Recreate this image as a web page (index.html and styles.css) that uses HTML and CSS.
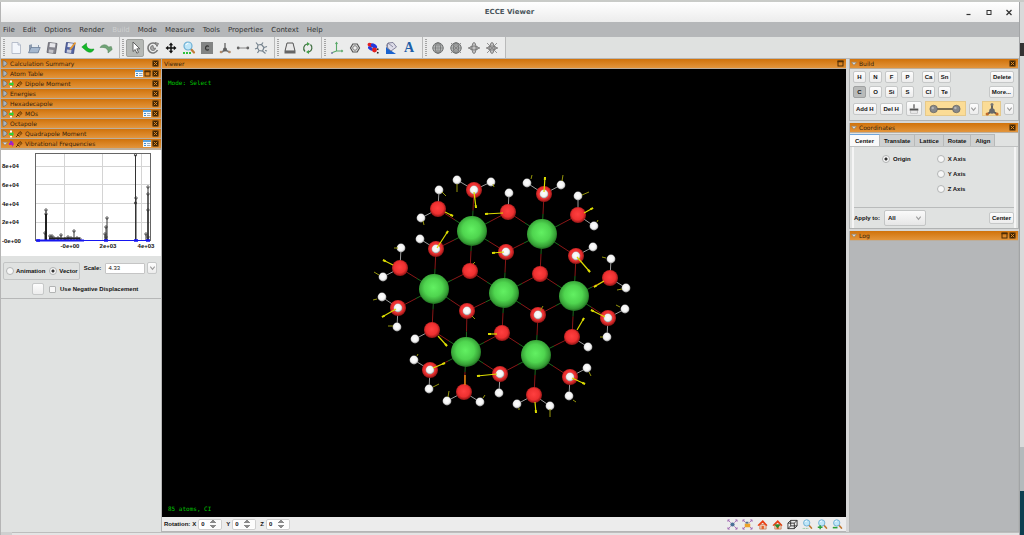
FILE: index.html
```html
<!DOCTYPE html>
<html lang="en">
<head>
<meta charset="utf-8">
<title>ECCE Viewer</title>
<link rel="stylesheet" href="styles.css">
</head>
<body>
<svg class="defs" aria-hidden="true">
  <defs>
    <symbol id="i-close" viewBox="0 0 7 7"><rect x=".5" y=".5" width="6" height="6" fill="#3d2405"/><path d="M1.800 1.800l3.400 3.400M5.200 1.800l-3.400 3.400" stroke="#e08a22" stroke-width="1"/></symbol>
    <symbol id="i-max" viewBox="0 0 7 7"><rect x="1" y="1" width="5" height="5" fill="none" stroke="#4d2c05"/><path d="M.5 1.500h6" stroke="#4d2c05" stroke-width="1.500"/></symbol>
    <symbol id="i-table" viewBox="0 0 8 7"><rect x="0" y="0" width="8" height="7" fill="#f2f8fc"/><path d="M0 0h8v2H0z" fill="#5aa2dc"/><path d="M1 3.500h2M1 5.500h2" stroke="#3f8fd0"/><path d="M4 3.500h3.500M4 5.500h3.500" stroke="#9ab"/></symbol>
    <symbol id="i-right" viewBox="0 0 5 7"><path d="M.5 .5C3 1 4.500 2.500 4.500 3.500S3 6 .5 6.500z" fill="#a9b3bc" stroke="#6d675f" stroke-width=".7"/></symbol>
    <symbol id="i-down" viewBox="0 0 7 5"><path d="M.5 1h6L3.500 4.500z" fill="#d5dade" stroke="#8a7a66" stroke-width=".7"/></symbol>
    <symbol id="i-clip" viewBox="0 0 8 8"><path d="M1 7l2-2M2 4l2.500 2.500M3 4l2-2.500 2 1.800L4.800 5.600M4 4.500l2-2" fill="none" stroke="#5b3204" stroke-width=".9"/></symbol>
    <symbol id="i-go" viewBox="0 0 5 8"><rect x="1" y=".5" width="2" height="2" fill="#fff"/><path d="M0 3h3V1.500l2 2.500-2 2.500V5H0z" fill="#30cf3a"/><rect x="1" y="6" width="2" height="1.500" fill="#fff"/></symbol>
    <symbol id="i-chev" viewBox="0 0 8 8"><path d="M1.500 2.500L4 5.500 6.500 2.500" fill="none" stroke="#9a9a9a" stroke-width="1.200"/></symbol>
    <symbol id="i-globe" viewBox="0 0 14 14"><circle cx="7" cy="7" r="5.200" fill="#b4b6b6" stroke="#707272"/><path d="M1 7h12M7 1v12M3 4h8M3 10h8" stroke="#858787" stroke-width=".7"/><ellipse cx="7" cy="7" rx="2.500" ry="5.200" fill="none" stroke="#6c6e6e" stroke-width=".8"/></symbol>
    <symbol id="i-orbit" viewBox="0 0 14 14"><path d="M1 7h12" stroke="#777" stroke-width="1.200"/><ellipse cx="7" cy="7" rx="2" ry="5.500" fill="#d8d8d8" stroke="#777"/><ellipse cx="7" cy="7" rx="4.500" ry="2" fill="none" stroke="#777"/><path d="M7 2v10" stroke="#999" stroke-width=".7"/></symbol>
    <symbol id="i-cross" viewBox="0 0 14 14"><path d="M2 2l10 10M12 2L2 12" stroke="#7d7d7d" stroke-width=".8"/></symbol>
    <symbol id="i-mag" viewBox="0 0 14 14"><path d="M8 7l4 4.500" stroke="#c07a35" stroke-width="2.200" stroke-linecap="round"/><circle cx="6" cy="5" r="4" fill="#bfe6f8" stroke="#6fb0d4" stroke-width="1.200"/><path d="M3.800 4a2.500 2.500 0 0 1 2.500-1.500" fill="none" stroke="#fff"/></symbol>
    <symbol id="i-house" viewBox="0 0 12 12"><path d="M3 6h7v5H3z" fill="#f3c8b0" stroke="#b9704a" stroke-width=".7"/><path d="M.5 6.800L6.300 1l5.200 5.800-1.500.8-3.800-3.600-4.200 3.600z" fill="#ea3f14"/><path d="M5 7.500h2.500V11H5z" fill="#e0622c"/></symbol>
    <symbol id="i-fit" viewBox="0 0 12 12"><path d="M1 1l3 3M11 1L8 4M1 11l3-3M11 11L8 8M1 3V1h2M9 1h2v2M1 9v2h2M9 11h2V9" fill="none" stroke="#a26bb5" stroke-width="1"/></symbol>
    <symbol id="i-save" viewBox="0 0 14 14"><path d="M3.500 1.500l8.500 1-1.500 10-8.500-1z" fill="#85858e" stroke="#5d5d66" stroke-width=".8"/><path d="M5 2l5.500.6-.6 4L4.400 6z" fill="#e6e6ea"/><path d="M4 8.500l4.500.5-.4 3-4.500-.5z" fill="#c5c5ca"/></symbol>
    <radialGradient id="ca" cx=".48" cy=".45" r=".55"><stop offset="0" stop-color="#62f062"/><stop offset=".55" stop-color="#4fd54f"/><stop offset=".85" stop-color="#36a036"/><stop offset="1" stop-color="#1f6c1f"/></radialGradient>
    <radialGradient id="ox" cx=".48" cy=".45" r=".55"><stop offset="0" stop-color="#ff4040"/><stop offset=".65" stop-color="#ee3030"/><stop offset="1" stop-color="#8c1414"/></radialGradient>
    <radialGradient id="hy" cx=".48" cy=".45" r=".55"><stop offset="0" stop-color="#fff"/><stop offset=".65" stop-color="#f2f2f2"/><stop offset="1" stop-color="#8e8e8e"/></radialGradient>
  </defs>
</svg>

<div class="desk">
<div class="window">
  <header class="titlebar">
    <h1>ECCE Viewer</h1>
    <div class="winbtns">
      <button aria-label="Minimize"><svg viewBox="0 0 8 8"><path d="M1.500 6.500h4" stroke="#333" stroke-width="1.200"/></svg></button>
      <button aria-label="Maximize"><svg viewBox="0 0 8 8"><rect x="2" y="2.500" width="4" height="4" fill="none" stroke="#333"/></svg></button>
      <button aria-label="Close"><svg viewBox="0 0 8 8"><path d="M1.500 2l5 5M6.500 2l-5 5" stroke="#333" stroke-width="1.300"/></svg></button>
    </div>
  </header>

  <nav class="menubar">
    <button>File</button><button>Edit</button><button>Options</button><button>Render</button><button disabled>Build</button><button>Mode</button><button>Measure</button><button>Tools</button><button>Properties</button><button>Context</button><button>Help</button>
  </nav>

  <div class="toolbar">
    <div class="group"><i class="grip"></i>
      <button aria-label="New"><svg viewBox="0 0 14 14"><path d="M3 1.500h6l2.500 2.500v8.500H3z" fill="#f3f6fb" stroke="#aab2c2" stroke-width=".8"/><path d="M9 1.500V4h2.500" fill="#dde3ee" stroke="#aab2c2" stroke-width=".8"/></svg></button>
      <button aria-label="Open"><svg viewBox="0 0 14 14"><path d="M2 4l4-1 1 1h5v7.500H2z" fill="#8b9aae"/><path d="M5 2.500l6-.5v5H5z" fill="#e6eaee"/><path d="M1.500 11.800L4 6.500h9.200L11 11.800z" fill="#a4b7ce" stroke="#6c7f98" stroke-width=".8"/></svg></button>
      <button aria-label="Save"><svg viewBox="0 0 14 14"><use href="#i-save"/></svg></button>
      <button aria-label="Save as"><svg viewBox="0 0 14 14"><path d="M3.500 1.500l8.500 1-1.500 10-8.500-1z" fill="#5465a4" stroke="#39467c" stroke-width=".8"/><path d="M5 2l5 .6-.6 4L4.400 6z" fill="#e6e8f2"/><path d="M4 8.500l4.500.5-.4 3-4.500-.5z" fill="#c7cbdc"/><path d="M12.500 1.500L7 8.500" stroke="#e79a33" stroke-width="1.800"/></svg></button>
      <button aria-label="Undo"><svg viewBox="0 0 14 14"><path d="M.8 6L5.500 2.200v2.300C6.500 8 9 8.500 13 8c-1.500 3.800-4.500 4-7.500 2z" fill="#14b828" stroke="#0d8a1c" stroke-width=".5"/></svg></button>
      <button aria-label="Redo"><svg viewBox="0 0 14 14"><path d="M13.200 8.500L9 12V9.800C8 7 5.500 6 1 6.500 3 3 7.500 2.800 9.500 6l2.800-.5z" fill="#6fa476" stroke="#55805b" stroke-width=".5"/></svg></button>
    </div>
    <div class="group"><i class="grip"></i>
      <button class="on" aria-label="Select"><svg viewBox="0 0 14 14"><path d="M5 1v9.500l2.200-2 1.600 3.700 1.700-.8-1.700-3.600h3z" fill="#fff" stroke="#555" stroke-width=".9"/></svg></button>
      <button aria-label="Rotate"><svg viewBox="0 0 14 14"><path d="M11.500 9A5 5 0 1 1 11 4" fill="none" stroke="#777" stroke-width="1.600"/><path d="M9 1.500l3.500 1-1.500 3zM9.500 7a2.500 2.500 0 1 1-2.500-2.500l.5 3z" fill="#aaa" stroke="#777" stroke-width=".9"/></svg></button>
      <button aria-label="Translate"><svg viewBox="0 0 14 14"><path d="M3 7h8M7 3v8" stroke="#111" stroke-width="1.500"/><path d="M7 1.500l2.200 2.700H4.800zM7 12.500l2.200-2.700H4.800zM1.500 7l2.700-2.200v4.400zM12.500 7L9.800 4.800v4.400z" fill="#111"/></svg></button>
      <button aria-label="Zoom"><svg viewBox="0 0 14 14"><use href="#i-mag"/><path d="M1 12h8" stroke="#2fc23e" stroke-width="2.200" stroke-dasharray="2 1"/></svg></button>
      <button aria-label="Element"><svg viewBox="0 0 14 14"><rect x="1" y="1" width="12" height="12" fill="#828484"/><path d="M8.800 5.500Q7 4.200 5.800 5.800 5 7.500 6.200 8.800 7.500 9.600 8.800 8.600" fill="none" stroke="#333" stroke-width="1.200"/></svg></button>
      <button aria-label="Fragment"><svg viewBox="0 0 14 14"><path d="M7 2v7M7 9l-4 2.500M7 9l4.500 2" stroke="#777" stroke-width="1.500"/><circle cx="7" cy="8.500" r="2" fill="#5f5f5f"/><circle cx="3" cy="11" r="1.300" fill="#b08a6c"/><circle cx="11.500" cy="11" r="1.300" fill="#b08a6c"/></svg></button>
      <button aria-label="Bond"><svg viewBox="0 0 14 14"><path d="M2 7h10" stroke="#888" stroke-width="1"/><circle cx="2.200" cy="7" r="1.400" fill="#666"/><circle cx="11.800" cy="7" r="1.400" fill="#666"/></svg></button>
      <button aria-label="Ring"><svg viewBox="0 0 14 14"><path d="M4 4l3.500-.5L10 6.500 8.500 10 5 9.500 3.500 7zM4 4L2 1.500M7.500 3.500L9 1.500M10 6.500l3-1M8.500 10l3 2.500M5 9.500L3.500 12M3.500 7L1 8M11 9.500l2 .5" fill="none" stroke="#76838e" stroke-width="1.200"/></svg></button>
    </div>
    <div class="group"><i class="grip"></i>
      <button aria-label="Perspective"><svg viewBox="0 0 14 14"><path d="M4 2h6l2 8H2z" fill="#e9e9e9" stroke="#555"/><path d="M1.500 10h11v2.500h-11z" fill="#666"/></svg></button>
      <button aria-label="Spin"><svg viewBox="0 0 14 14"><path d="M4 10.500A4.500 4.500 0 0 1 6 3M9.500 3.500A4.500 4.500 0 0 1 8 11" fill="none" stroke="#3a6b3c" stroke-width="1.200"/><path d="M6 1l3 2-3 2zM8 9l-3 2 3 2z" fill="#44a04a"/></svg></button>
    </div>
    <div class="group"><i class="grip"></i>
      <button aria-label="Axes"><svg viewBox="0 0 14 14"><path d="M6.500 1.500V10h6M6.500 10l-4 1.500M5.500 3l1-1.500 1 1.500M11.500 9l1 1-1 1" fill="none" stroke="#58a868" stroke-width="1.100"/><path d="M1 12h2" stroke="#448" stroke-width="1"/></svg></button>
      <button aria-label="Aromatic ring"><svg viewBox="0 0 14 14"><path d="M4.800 3h4.400l2.300 4-2.300 4H4.800L2.500 7z" fill="none" stroke="#555" stroke-width="1.200"/><circle cx="7" cy="7" r="2.300" fill="none" stroke="#777"/></svg></button>
      <button aria-label="Surface"><svg viewBox="0 0 14 14"><ellipse cx="4.500" cy="4" rx="3" ry="2" fill="#e32020" transform="rotate(25 4.500 4)"/><ellipse cx="8" cy="5" rx="3.500" ry="2" fill="#2238e0" transform="rotate(35 8 5)"/><ellipse cx="4.500" cy="7.500" rx="3" ry="1.600" fill="#2238e0" transform="rotate(35 4.500 7.500)"/><circle cx="8.500" cy="9" r="2.400" fill="#e32020"/><path d="M11 8l1.500.5M11 11.500l1.500.5" stroke="#222" stroke-width="1.600"/></svg></button>
      <button aria-label="Background"><svg viewBox="0 0 14 14"><path d="M2 6v7h10l-3-2z" fill="#1a63cf"/><path d="M4 2l5-.5L12.500 6 7 10 3 6.500z" fill="#dddce8" stroke="#777791" stroke-width=".9"/><path d="M4 2q-3 2 0 5M4 2l5 4" fill="none" stroke="#777791" stroke-width=".8"/></svg></button>
      <button class="letter" aria-label="Labels">A</button>
    </div>
    <div class="group"><i class="grip"></i>
      <button aria-label="Sphere"><svg viewBox="0 0 14 14"><use href="#i-globe"/></svg></button>
      <button aria-label="Sphere off"><svg viewBox="0 0 14 14"><use href="#i-globe"/><use href="#i-cross"/></svg></button>
      <button aria-label="Orbital"><svg viewBox="0 0 14 14"><use href="#i-orbit"/></svg></button>
      <button aria-label="Orbital off"><svg viewBox="0 0 14 14"><use href="#i-orbit"/><use href="#i-cross"/></svg></button>
    </div>
  </div>

  <main class="work">
    <aside class="left">
      <section class="bar"><svg class="tw"><use href="#i-right"/></svg><h2>Calculation Summary</h2><button aria-label="Close"><svg class="sq"><use href="#i-close"/></svg></button></section>
      <section class="bar"><svg class="tw"><use href="#i-right"/></svg><h2>Atom Table</h2><button aria-label="Table"><svg class="tb"><use href="#i-table"/></svg></button><button aria-label="Maximize"><svg class="sq"><use href="#i-max"/></svg></button><button aria-label="Close"><svg class="sq"><use href="#i-close"/></svg></button></section>
      <section class="bar"><svg class="tw"><use href="#i-right"/></svg><svg class="go"><use href="#i-go"/></svg><svg class="clip"><use href="#i-clip"/></svg><h2>Dipole Moment</h2><button aria-label="Close"><svg class="sq"><use href="#i-close"/></svg></button></section>
      <section class="bar"><svg class="tw"><use href="#i-right"/></svg><h2>Energies</h2><button aria-label="Close"><svg class="sq"><use href="#i-close"/></svg></button></section>
      <section class="bar"><svg class="tw"><use href="#i-right"/></svg><h2>Hexadecapole</h2><button aria-label="Close"><svg class="sq"><use href="#i-close"/></svg></button></section>
      <section class="bar"><svg class="tw"><use href="#i-right"/></svg><svg class="go"><use href="#i-go"/></svg><svg class="clip"><use href="#i-clip"/></svg><h2>MOs</h2><button aria-label="Table"><svg class="tb"><use href="#i-table"/></svg></button><button aria-label="Close"><svg class="sq"><use href="#i-close"/></svg></button></section>
      <section class="bar"><svg class="tw"><use href="#i-right"/></svg><h2>Octapole</h2><button aria-label="Close"><svg class="sq"><use href="#i-close"/></svg></button></section>
      <section class="bar"><svg class="tw"><use href="#i-right"/></svg><svg class="go"><use href="#i-go"/></svg><svg class="clip"><use href="#i-clip"/></svg><h2>Quadrapole Moment</h2><button aria-label="Close"><svg class="sq"><use href="#i-close"/></svg></button></section>
      <section class="bar"><svg class="tw"><use href="#i-down"/></svg><svg class="go" viewBox="0 0 5 8"><path d="M0 3h3V1l2 3-2 3V5H0z" fill="#b41cc0"/><circle cx="2" cy="2" r="1.200" fill="#7a3cc8"/></svg><svg class="clip"><use href="#i-clip"/></svg><h2>Vibrational Frequencies</h2><button aria-label="Table"><svg class="tb"><use href="#i-table"/></svg></button><button aria-label="Close"><svg class="sq"><use href="#i-close"/></svg></button></section>
      <svg id="chart" class="chart" viewBox="0 150 160 106" role="img" aria-label="Vibrational spectrum"></svg>
      <form class="controls">
        <div class="crow">
          <div class="modes">
            <label><input type="radio" name="mode">Animation</label>
            <label><input type="radio" name="mode" checked>Vector</label>
          </div>
          <label class="scale" for="scale">Scale:</label>
          <input id="scale" class="field" type="text" value="4.33">
          <button type="button" class="btn drop" aria-label="Scale values"><svg><use href="#i-chev"/></svg></button>
        </div>
        <div class="crow second">
          <button type="button" class="btn swatch" aria-label="Vector colour"></button>
          <label><input type="checkbox">Use Negative Displacement</label>
        </div>
      </form>
    </aside>

    <section class="viewer">
      <div class="bar"><h2>Viewer</h2><button aria-label="Maximize"><svg class="sq"><use href="#i-max"/></svg></button></div>
      <div class="scene">
        <p>Mode: Select</p>
        <svg id="molecule" viewBox="162 69 684 448" role="img" aria-label="Molecule"></svg>
        <p class="count">85 atoms, CI</p>
      </div>
      <div class="status">
        <span>Rotation:</span>
        <label for="rx">X</label><input id="rx" type="number" value="0">
        <label for="ry">Y</label><input id="ry" type="number" value="0">
        <label for="rz">Z</label><input id="rz" type="number" value="0">
        <div class="views">
          <button aria-label="Fit"><svg viewBox="0 0 12 12"><use href="#i-fit"/><circle cx="6" cy="6" r="2.300" fill="#4a6f96"/></svg></button>
          <button aria-label="Fit selection"><svg viewBox="0 0 12 12"><use href="#i-fit"/><path d="M3 5h6v4H3z" fill="#eda32a"/><path d="M4 3h3v2H4z" fill="#55738c"/></svg></button>
          <button aria-label="Home"><svg viewBox="0 0 12 12"><use href="#i-house"/></svg></button>
          <button aria-label="Set home"><svg viewBox="0 0 12 12"><use href="#i-house"/><path d="M2.500 6h7L6 10z" fill="#228b2e"/></svg></button>
          <button aria-label="Box"><svg viewBox="0 0 12 12"><path d="M1 4.500h7v6H1zM4 1.500h7v6H4zM1 4.500l3-3M8 4.500l3-3M8 10.500l3-3M1 10.500l3-3" fill="none" stroke="#222" stroke-width=".9"/></svg></button>
          <button aria-label="Zoom"><svg viewBox="0 0 14 14"><use href="#i-mag"/><path d="M1 12h8" stroke="#7ab57a" stroke-width="1.200" stroke-dasharray="1 1"/></svg></button>
          <button aria-label="Zoom in"><svg viewBox="0 0 14 14"><use href="#i-mag"/><path d="M1 10.500h6M4 8v5" stroke="#2da13a" stroke-width="1.800"/></svg></button>
          <button aria-label="Zoom out"><svg viewBox="0 0 14 14"><use href="#i-mag"/><path d="M1 11h6" stroke="#2da13a" stroke-width="2"/></svg></button>
        </div>
      </div>
    </section>

    <aside class="right">
      <section class="panel">
        <div class="bar"><svg class="tw"><use href="#i-down"/></svg><h2>Build</h2><button aria-label="Close"><svg class="sq"><use href="#i-close"/></svg></button></div>
        <div class="build">
          <div class="brow"><button class="btn">H</button><button class="btn">N</button><button class="btn">F</button><button class="btn">P</button><button class="btn apart">Ca</button><button class="btn">Sn</button><button class="btn wide end">Delete</button></div>
          <div class="brow"><button class="btn on">C</button><button class="btn">O</button><button class="btn">Si</button><button class="btn">S</button><button class="btn apart">Cl</button><button class="btn">Te</button><button class="btn wide end">More...</button></div>
          <div class="brow tools">
            <button class="btn wide">Add H</button><button class="btn wide">Del H</button>
            <button class="btn clean" aria-label="Clean"><svg viewBox="0 0 14 14"><path d="M7 1.500v5" stroke="#444" stroke-width="1.300"/><path d="M2 6.500h10v2.500H2z" fill="#555"/><path d="M3 9h8v3H3z" fill="#f1f1f1" stroke="#999" stroke-width=".6"/></svg></button>
            <button class="pick bond" aria-label="Single bond"><svg viewBox="0 0 36 12"><path d="M6 6h24" stroke="#333" stroke-width="1.400"/><circle cx="6" cy="6" r="4" fill="#87888a" stroke="#5d5d5d" stroke-width=".7"/><circle cx="30" cy="6" r="4" fill="#87888a" stroke="#5d5d5d" stroke-width=".7"/><circle cx="5" cy="5" r="1.300" fill="#b5b5b5"/><circle cx="29" cy="5" r="1.300" fill="#b5b5b5"/></svg></button>
            <button class="btn drop" aria-label="Bond types"><svg><use href="#i-chev"/></svg></button>
            <button class="pick geom end" aria-label="Geometry"><svg viewBox="0 0 14 14"><path d="M7 2v7M7 9l-4.500 3M7 9l5 3" stroke="#555" stroke-width="1.800"/><circle cx="7" cy="9" r="2.800" fill="#66686b"/><circle cx="7" cy="2.500" r="1.500" fill="#777"/><circle cx="2.200" cy="12" r="1.600" fill="#c06a2a"/><circle cx="12" cy="12" r="1.600" fill="#c06a2a"/></svg></button>
            <button class="btn drop" aria-label="Geometries"><svg><use href="#i-chev"/></svg></button>
          </div>
        </div>
      </section>
      <section class="panel">
        <div class="bar"><svg class="tw"><use href="#i-down"/></svg><h2>Coordinates</h2><button aria-label="Close"><svg class="sq"><use href="#i-close"/></svg></button></div>
        <div class="tabs"><button class="sel">Center</button><button>Translate</button><button>Lattice</button><button>Rotate</button><button>Align</button></div>
        <div class="coords">
          <div class="axes">
            <label><input type="radio" name="axis" checked>Origin</label>
            <div class="col">
              <label><input type="radio" name="axis">X Axis</label>
              <label><input type="radio" name="axis">Y Axis</label>
              <label><input type="radio" name="axis">Z Axis</label>
            </div>
          </div>
          <div class="apply">
            <label for="apply">Apply to:</label>
            <span class="select"><select id="apply"><option>All</option></select><svg><use href="#i-chev"/></svg></span>
            <button class="btn wide end">Center</button>
          </div>
        </div>
      </section>
      <section class="panel log">
        <div class="bar"><svg class="tw"><use href="#i-down"/></svg><h2>Log</h2><button aria-label="Maximize"><svg class="sq"><use href="#i-max"/></svg></button><button aria-label="Close"><svg class="sq"><use href="#i-close"/></svg></button></div>
      </section>
    </aside>
  </main>
  <footer class="foot"></footer>
</div>
<div class="edge"></div>
</div>
<script src="scene.js"></script>
</body>
</html>
```

FILE: styles.css
```css
* { box-sizing: border-box; }
body { margin: 0; font: 6px/8px "DejaVu Sans", sans-serif; color: #111; }
button, input, select { font: inherit; color: inherit; margin: 0; padding: 0; border: 0; background: none; }
h1, h2, p { margin: 0; font-size: inherit; font-weight: normal; }
svg { display: block; }
.defs { position: absolute; width: 0; height: 0; }

.desk { display: flex; height: 100vh; min-height: 320px; border-top: 2px solid #c9cbc8; background: #cfd0d0; }
.window { flex: 1; min-width: 0; display: flex; flex-direction: column; border-left: 1px solid #b5b5b5; border-right: 1px solid #a2a4a6; }
.edge { width: 4px; background: linear-gradient(#d9dada 0 41px, #333 41px 54px, #d9dada 54px 445px, #b4babc 445px 489px, #0d3f50 489px); }

.titlebar { display: flex; align-items: center; height: 20px; background: linear-gradient(#fff, #ececec); }
.titlebar h1 { flex: 1; padding-left: 53px; text-align: center; font-weight: bold; font-size: 7px; color: #4b565c; }
.winbtns { display: flex; gap: 12px; padding-right: 6px; }
.winbtns svg { width: 8px; height: 8px; }

.menubar { display: flex; gap: 8px; height: 15px; padding-left: 2px; background: #b5b7b9; font-size: 7px; color: #333; }
.menubar button:disabled { color: #cfd1d1; }

.toolbar { display: flex; height: 22px; background: #dfe1e0; border-bottom: 1px solid #b6b6b6; }
.group { display: flex; align-items: center; padding: 0 4px 0 2px; background: #ebecec; border-right: 1px solid #b9baba; }
.grip { width: 2px; height: 18px; margin-right: 2px; background: repeating-linear-gradient(#a5a5a5 0 1px, #ebecec 1px 2px); }
.group button { display: grid; place-items: center; width: 18px; height: 18px; }
.group svg { width: 14px; height: 14px; }
.group .on { background: #b5b8b5; border: 1px solid #9fa29f; border-radius: 2px; }
.group .letter { font: bold 14px/12px "Liberation Serif", serif; color: #1d5fa8; }

.work { flex: 1; min-height: 0; display: grid; grid-template-columns: 161px 1fr 173px; background: #d5d6d6; }

.bar { display: flex; align-items: center; gap: 1px; height: 10px; padding: 0 2px 0 1px; background: linear-gradient(#d0720a, #e3953c); border-bottom: 1px solid #bcae9c; color: #382007; }
.bar h2 { flex: 1; padding-left: 1px; white-space: nowrap; }
.tw { width: 6px; height: 7px; }
.go { width: 5px; height: 8px; }
.clip { width: 8px; height: 8px; }
.sq { width: 7px; height: 7px; }
.tb { width: 8px; height: 7px; }

.left { border-right: 1px solid #b5b5b5; background: #e0e2e1; }
.chart { width: 100%; background: #fff; border-top: 1px solid #bcae9c; }
.chart text { font: bold 6px "Liberation Sans", sans-serif; fill: #111; }
.controls { padding: 6px 4px 3px 2px; border-bottom: 1px solid #b6b7b7; font: bold 6px/8px "Liberation Sans", sans-serif; }
.crow { display: flex; align-items: center; }
.controls label { display: flex; align-items: center; gap: 2px; }
.modes { display: flex; gap: 4px; padding: 4px 1px 4px 2px; border: 1px solid #c3c5c5; border-radius: 2px; }
.controls .scale { margin: 0 4px 6px 4px; }
.field { flex: 1; min-width: 0; height: 11px; margin-bottom: 6px; padding: 0 2px; background: #fff; border: 1px solid #c5c5c5; border-radius: 1px; font-weight: normal; }
.crow .drop { margin: 0 0 6px 2px; }
.second { gap: 5px; padding: 3px 0 0 29px; }
.controls .second label { gap: 4px; }
.btn.swatch { width: 12px; height: 12px; }

input[type=radio], input[type=checkbox] { appearance: none; width: 8px; height: 8px; border: 1px solid #b2b4b4; background: #f7f7f7; border-radius: 50%; }
input[type=checkbox] { width: 7px; height: 7px; border-radius: 1px; }
input[type=radio]:checked { background: radial-gradient(circle, #333 0 1px, #f7f7f7 2px); }

.btn { display: grid; place-items: center; height: 12px; background: linear-gradient(#fdfdfd, #ececec); border: 1px solid #c6c8c8; border-radius: 2px; white-space: nowrap; }
.drop { width: 10px; }
.drop svg { width: 7px; height: 8px; }

.viewer { display: flex; flex-direction: column; min-width: 0; border-bottom: 1px solid #b5b5b5; }
.scene { flex: 1; min-height: 0; display: flex; flex-direction: column; position: relative; padding: 10px 6px 4px; background: #000; color: #00c800; font-family: "DejaVu Sans Mono", monospace; }
.scene .count { margin-top: auto; }
.scene svg { position: absolute; inset: 0; width: 100%; height: 100%; }
.status { display: flex; align-items: center; gap: 2px; height: 14px; padding: 0 3px 0 2px; background: #ececec; font: bold 6px/8px "Liberation Sans", sans-serif; }
.status input { width: 24px; height: 11px; padding-left: 2px; background: #fff; border: 1px solid #cfcfcf; border-radius: 2px; margin-right: 2px; }
.status input::-webkit-inner-spin-button { opacity: 1; width: 6px; height: 9px; }
.views { display: flex; gap: 4px; margin-left: auto; }
.views svg { width: 11px; height: 11px; }

.right { display: flex; flex-direction: column; gap: 2px; padding-left: 3px; font: bold 6px/8px "Liberation Sans", sans-serif; }
.right h2 { font: 6px/8px "DejaVu Sans", sans-serif; }
.panel { border: solid #b0b2b2; border-width: 0 1px 1px; background: #e0e2e1; }
.log { flex: 1; background: #b5b7b9; }
.build { display: flex; flex-direction: column; gap: 3px; padding: 2px 4px 4px 3px; }
.brow { display: flex; align-items: center; gap: 3px; }
.brow .btn { width: 13px; }
.brow .apart { margin-left: 5px; }
.btn.wide { width: auto; padding: 0 2px; }
.brow .wide { min-width: 23px; }
.end { margin-left: auto !important; }
.btn.on { background: #b9bbba; border-color: #9fa1a1; }
.tools .btn.clean { width: 16px; height: 15px; }
.clean svg { width: 12px; height: 12px; }
.pick { display: grid; place-items: center; height: 15px; background: #fbdc96; border: 1px solid #e6c98a; }
.bond { width: 41px; }
.bond svg { width: 34px; height: 12px; }
.geom { width: 19px; }
.geom svg { width: 14px; height: 14px; }
.tools .drop { width: 10px; }

.tabs { display: flex; height: 14px; padding-top: 1px; background: #e0e2e1; border-bottom: 1px solid #bfc1c1; }
.tabs button { padding: 0 4px; background: #cfd1d1; border: 1px solid #b7b9b9; border-width: 1px 1px 0 0; font-weight: bold; }
.tabs .sel { background: #fafafa; border-top: 1px solid #6fa5dc; padding: 0 5px; }
.coords { margin: 0 2px; border: solid #f5f5f5; border-width: 0 2px; }
.axes { display: flex; padding: 8px 0 14px 28px; }
.axes label { display: flex; gap: 3px; height: 8px; }
.axes .col { display: flex; flex-direction: column; gap: 7px; margin-left: 26px; }
.apply { display: flex; align-items: center; gap: 4px; padding: 2px 0; border-top: 1px solid #b9bbbb; }
.select { display: flex; align-items: center; width: 42px; height: 16px; padding: 0 3px; background: linear-gradient(#fafafa, #e6e6e6); border: 1px solid #c3c5c5; border-radius: 2px; }
.select select { appearance: none; flex: 1; min-width: 0; }
.select svg { width: 7px; height: 8px; }

.foot { height: 3px; margin-left: 11px; background: #e4e4e4; border-top: 1px solid #bdbdbd; }
```

FILE: scene.js
```js
const NS = 'http://www.w3.org/2000/svg';
function add(parent, tag, attrs, text) {
  const el = document.createElementNS(NS, tag);
  for (const k in attrs) el.setAttribute(k, attrs[k]);
  if (text) el.textContent = text;
  parent.appendChild(el);
}

// Molecule: atom centres per element.
const mol = document.getElementById('molecule');
const metals = [[472,231],[542,234],[434,289],[504,293],[574,296],[466,352],[536,355]];
const oxygens = [[438,209],[508,212],[578,215],[400,268],[470,271],[540,274],[610,278],
  [432,330],[502,333],[572,337],[464,392],[534,395]];
const hydroxyls = [[474,190],[544,194],[436,249],[506,252],[576,256],[398,308],[467,311],
  [538,315],[608,318],[430,370],[500,374],[570,377]];
const hydrogens = [[457,180],[491,182],[439,190],[421,218],[420,239],[401,248],[383,277],[382,297],
  [509,193],[527,183],[561,185],[578,196],[594,226],[593,247],[611,259],[626,288],[397,327],
  [415,339],[414,360],[429,389],[447,401],[480,402],[499,393],[588,347],[625,309],[607,337],
  [587,368],[569,396],[517,404],[550,406]];
const line = (a, b, color, w) => add(mol, 'line',
  { x1: a[0], y1: a[1], x2: b[0], y2: b[1], stroke: color, 'stroke-width': w });
const dist = (a, b) => Math.hypot(a[0] - b[0], a[1] - b[1]);

for (const o of [...oxygens, ...hydroxyls]) {
  for (const m of metals) if (dist(o, m) < 45) {
    const mid = [(o[0] + m[0]) / 2, (o[1] + m[1]) / 2];
    line(m, mid, '#1c6a1c', 1);
    line(mid, o, '#8a1717', 1);
  }
  for (const h of hydrogens) if (dist(o, h) < 23) line(o, h, '#9a9a9a', 1);
}
const ball = (p, r, fill) => add(mol, 'circle', { cx: p[0], cy: p[1], r, fill: `url(#${fill})` });
metals.forEach(p => ball(p, 15, 'ca'));
[...oxygens, ...hydroxyls].forEach(p => ball(p, 8, 'ox'));
[...hydrogens, ...hydroxyls].forEach(p => ball(p, 4.4, 'hy'));

// Displacement vectors: short ones are plain strokes, long ones carry a head.
const shorts = [[457,184,457,192],[442,192,446,196],[423,221,424,225],[493,184,494,187],
  [398,248,394,248],[379,275,374,272],[473,264,475,262],[531,179,532,175],[562,181,563,175],
  [582,195,589,192],[597,222,598,220],[606,258,602,257],[622,289,617,290],[377,299,373,300],
  [393,326,388,326],[472,316,475,319],[417,356,418,354],[433,387,439,384],[448,397,449,391],
  [483,398,485,395],[540,311,543,306],[620,307,616,305],[603,337,600,337],[589,372,591,376],
  [573,400,576,402],[519,408,519,410],[550,409,550,417]];
const longs = [[445,212,453,216],[474,192,476,208],[503,213,485,214],[437,248,448,231],
  [393,265,383,260],[504,252,492,253],[544,192,545,177],[584,213,593,208],[577,257,590,272],
  [604,281,594,287],[396,309,382,317],[438,336,447,346],[497,334,488,334],[433,368,445,363],
  [497,374,477,376],[577,330,584,318],[605,317,591,310],[572,378,585,384],[535,402,536,413]];
shorts.forEach(v => line(v, v.slice(2), '#96960c', 1));
longs.forEach(v => {
  line(v, v.slice(2), '#dcdc00', 1.2);
  const n = Math.hypot(v[2] - v[0], v[3] - v[1]);
  const ux = (v[2] - v[0]) / n, uy = (v[3] - v[1]) / n;
  line([v[2] - 3 * ux, v[3] - 3 * uy], [v[2], v[3]], '#dcdc00', 2);
});
line([465,385], [465,375], '#e08a10', 1.5);

// Spectrum.
const chart = document.getElementById('chart');
const seg = (x1, y1, x2, y2, c, w) => add(chart, 'line', { x1, y1, x2, y2, stroke: c, 'stroke-width': w });
[166.5, 184.5, 203.5, 222.5].forEach(y => seg(35, y, 149, y, '#d4d4d4', 1));
[63.5, 101.5, 140.5].forEach(x => seg(x, 153, x, 241, '#d4d4d4', 1));
add(chart, 'rect', { x: 34.5, y: 153.5, width: 115, height: 87, fill: 'none', stroke: '#666' });
const peaks = [[44,233],[45,210],[45,214],[49,236],[51,236],[53,238],[57,238],[60,235],[64,239],
  [67,237],[70,238],[73,231],[76,238],[79,239],[104,234],[105,227],[106,218],[105,237],[134.5,155],[135,198],
  [134.5,203],[145,234],[147,187],[147,194],[147,210],[147,237]];
peaks.forEach(([x, y]) => {
  seg(x, y, x, 241, '#333', 1);
  add(chart, 'circle', { cx: x, cy: y, r: 1.2, fill: 'none', stroke: '#333', 'stroke-width': .8 });
});
seg(45, 214, 45, 241, '#111', 1.6);
seg(48, 238.5, 79, 238.5, '#222', 2);
seg(36, 240.5, 83, 240.5, '#1616f0', 2);
seg(83, 240.5, 149, 240.5, '#1616f0', 1);
[37, 105, 135, 147].forEach(x => seg(x - 2, 240.5, x + 2, 240.5, '#1616f0', 2.5));
[['8e+04',168],['6e+04',187],['4e+04',206],['2e+04',224],['-0e+00',243]]
  .forEach(([t, y]) => add(chart, 'text', { x: 1, y }, t));
[['-0e+00',69],['2e+03',107],['4e+03',145]]
  .forEach(([t, x]) => add(chart, 'text', { x, y: 248, 'text-anchor': 'middle' }, t));
```
